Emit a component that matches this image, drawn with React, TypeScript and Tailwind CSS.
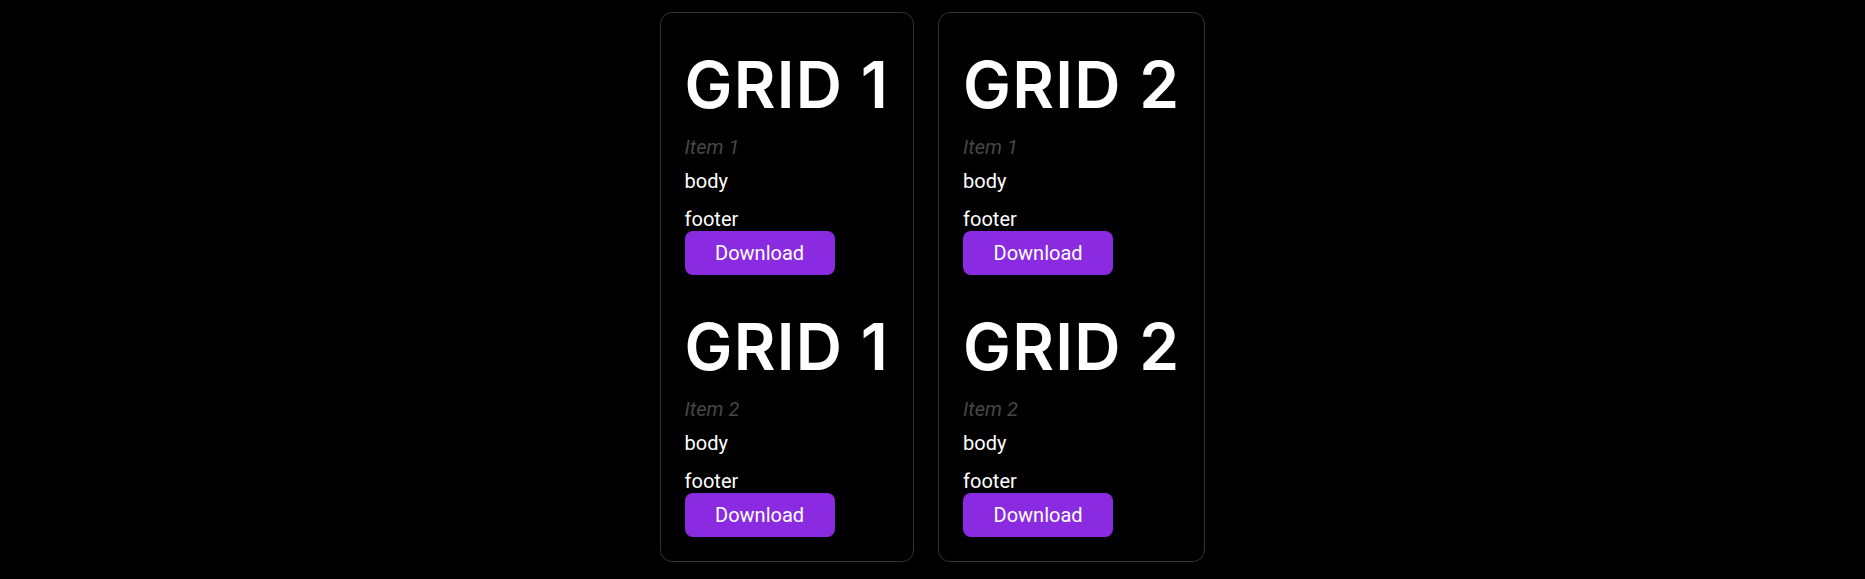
const items = ["Item 1", "Item 2"];

const GridCard = ({ title }: { title: string }) => {
  return (
    <div className="flex flex-col gap-6 rounded-xl border border-[#333] bg-black p-6">
      {items.map((item) => (
        <div key={item} className="flex flex-col">
          <h1 className="font-['Inter',sans-serif] text-[64px] font-semibold leading-[1.5] tracking-[0.02em] text-white whitespace-nowrap">
            {title}
          </h1>
          <p className="font-['Roboto',sans-serif] text-[20px] italic leading-7 text-[#474747]">
            {item}
          </p>
          <p className="mt-[6px] font-['Roboto',sans-serif] text-[20px] leading-7 text-white">
            body
          </p>
          <p className="mt-3 font-['Roboto',sans-serif] text-[20px] leading-6 text-white">
            footer
          </p>
          <button className="h-11 w-[150px] rounded-lg bg-[#8a2be2] font-['Roboto',sans-serif] text-[20px] text-white">
            Download
          </button>
        </div>
      ))}
    </div>
  );
};

export default function App() {
  return (
    <div className="min-h-screen w-full bg-black pt-3">
      <div className="flex items-start justify-center gap-6">
        <GridCard title="GRID 1" />
        <GridCard title="GRID 2" />
      </div>
    </div>
  );
}
